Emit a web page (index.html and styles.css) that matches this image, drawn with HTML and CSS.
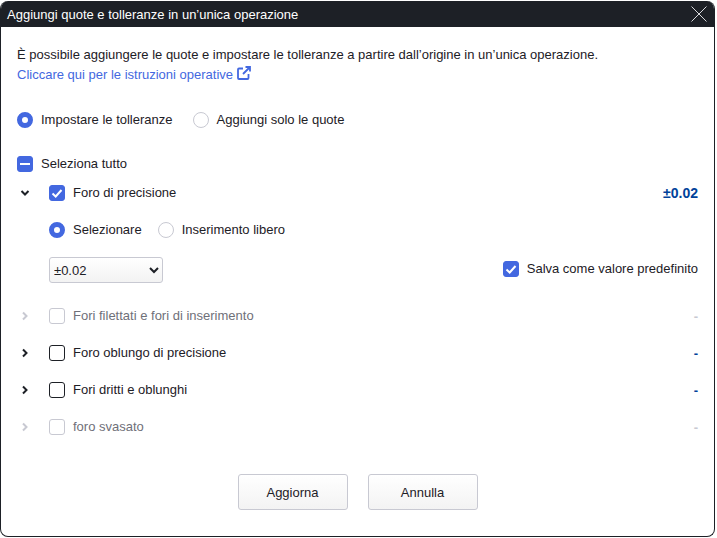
FILE: index.html
```html
<!DOCTYPE html>
<html lang="it">
<head>
<meta charset="UTF-8" />
<meta name="viewport" content="width=device-width, initial-scale=1" />
<title>Aggiungi quote e tolleranze</title>
<link rel="stylesheet" href="styles.css">
</head>
<body>
  <div class="dialog">
    <div class="titlebar">
      <span class="title">Aggiungi quote e tolleranze in un’unica operazione</span>
      <svg class="close" viewBox="0 0 16 16" aria-hidden="true"><path d="M0.5 0.5L15.5 15.5M15.5 0.5L0.5 15.5"/></svg>
    </div>
    <div class="content">
      <p class="intro">È possibile aggiungere le quote e impostare le tolleranze a partire dall’origine in un’unica operazione.</p>
      <a class="guide" href="#">Cliccare qui per le istruzioni operative
        <svg class="ext" viewBox="0 0 14 14" aria-hidden="true">
          <path d="M6 2.500H2a1 1 0 0 0-1 1V12a1 1 0 0 0 1 1h8.500a1 1 0 0 0 1-1V8"/>
          <path d="M8.500 1H13V5.500M13 1L6 8"/>
        </svg>
      </a>

      <div class="options top-options">
        <label class="opt"><span class="radio on"></span>Impostare le tolleranze</label>
        <label class="opt"><span class="radio"></span>Aggiungi solo le quote</label>
      </div>

      <label class="opt select-all"><span class="check mixed"></span>Seleziona tutto</label>

      <div class="row first-row">
        <svg class="chev" viewBox="0 0 10 10" aria-hidden="true"><path d="M1.500 3L5 6.500L8.500 3"/></svg>
        <label class="opt"><span class="check on"><svg viewBox="0 0 16 16" aria-hidden="true"><path d="M3.500 8.500L6.700 11.500L12.500 5"/></svg></span>Foro di precisione</label>
        <span class="value">±0.02</span>
      </div>

      <div class="detail">
        <div class="options">
          <label class="opt"><span class="radio on"></span>Selezionare</label>
          <label class="opt"><span class="radio"></span>Inserimento libero</label>
        </div>
        <div class="detail-line">
          <select class="tol"><option>±0.02</option></select>
          <label class="opt save-default"><span class="check on"><svg viewBox="0 0 16 16" aria-hidden="true"><path d="M3.500 8.500L6.700 11.500L12.500 5"/></svg></span>Salva come valore predefinito</label>
        </div>
      </div>

      <div class="row disabled after-detail">
        <svg class="chev" viewBox="0 0 10 10" aria-hidden="true"><path d="M3 1.500L6.500 5L3 8.500"/></svg>
        <label class="opt"><span class="check"></span>Fori filettati e fori di inserimento</label>
        <span class="value">-</span>
      </div>
      <div class="row">
        <svg class="chev" viewBox="0 0 10 10" aria-hidden="true"><path d="M3 1.500L6.500 5L3 8.500"/></svg>
        <label class="opt"><span class="check"></span>Foro oblungo di precisione</label>
        <span class="value">-</span>
      </div>
      <div class="row">
        <svg class="chev" viewBox="0 0 10 10" aria-hidden="true"><path d="M3 1.500L6.500 5L3 8.500"/></svg>
        <label class="opt"><span class="check"></span>Fori dritti e oblunghi</label>
        <span class="value">-</span>
      </div>
      <div class="row disabled">
        <svg class="chev" viewBox="0 0 10 10" aria-hidden="true"><path d="M3 1.500L6.500 5L3 8.500"/></svg>
        <label class="opt"><span class="check"></span>foro svasato</label>
        <span class="value">-</span>
      </div>

      <div class="actions">
        <button class="btn">Aggiorna</button>
        <button class="btn">Annulla</button>
      </div>
    </div>
  </div>
</body>
</html>
```

FILE: styles.css
```css
:root {
  --dark: #1d2026;
  --blue: #4368e0;
  --text: #1d2026;
  --line: #c8c9d2;
}
html, body {
  margin: 0;
  height: 100%;
  background: #fff;
}
body {
  font-family: "Liberation Sans", Arial, sans-serif;
  font-size: 13px;
  color: var(--text);
}
.dialog {
  box-sizing: border-box;
  width: 715px;
  height: 536px;
  margin-top: 1px;
  border: 1px solid var(--dark);
  border-top: 0;
  border-radius: 8px;
  overflow: hidden;
  background: #fff;
}
.titlebar {
  height: 26px;
  margin: 0 -1px;
  padding: 0 8px 0 7px;
  background: var(--dark);
  color: #fff;
  display: flex;
  align-items: center;
  justify-content: space-between;
}
.title {
  font-size: 13px;
}
.close {
  width: 16px;
  height: 16px;
  fill: none;
  stroke: #d8d9dc;
  stroke-width: 1;
}
.content {
  padding: 0 16px;
}
.intro {
  margin: 18px 0 0;
  line-height: 20px;
}
.guide {
  display: block;
  line-height: 20px;
  color: var(--blue);
  text-decoration: none;
}
.ext {
  width: 14px;
  height: 14px;
  vertical-align: -1px;
  fill: none;
  stroke: var(--blue);
  stroke-width: 1.8;
}
.options {
  display: flex;
  gap: 20px;
}
.top-options {
  margin-top: 25px;
}
.opt {
  display: flex;
  align-items: center;
  gap: 8px;
  line-height: 20px;
}
.radio {
  box-sizing: border-box;
  width: 16px;
  height: 16px;
  border: 1px solid var(--line);
  border-radius: 50%;
  background: #fff;
}
.radio.on {
  border: 5px solid var(--blue);
}
.check {
  box-sizing: border-box;
  width: 16px;
  height: 16px;
  border: 1px solid var(--dark);
  border-radius: 3px;
  background: #fff;
  display: flex;
  align-items: center;
  justify-content: center;
}
.check svg {
  width: 16px;
  height: 16px;
  flex: none;
  fill: none;
  stroke: #fff;
  stroke-width: 2;
}
.check.on, .check.mixed {
  background: var(--blue);
  border-color: var(--blue);
}
.check.mixed::before {
  content: "";
  width: 10px;
  height: 2px;
  background: #fff;
}
.select-all {
  margin-top: 24px;
}
.row {
  display: flex;
  align-items: center;
  height: 20px;
  margin-top: 17px;
}
.first-row {
  margin-top: 9px;
}
.after-detail {
  margin-top: 23px;
}
.chev {
  width: 10px;
  height: 10px;
  margin: 0 19px 0 3px;
  flex: none;
  fill: none;
  stroke: var(--dark);
  stroke-width: 2;
}
.value {
  margin-left: auto;
  font-weight: 700;
  color: #00429a;
}
.first-row .value {
  font-size: 14px;
}
.detail {
  padding-left: 32px;
}
.detail > .options {
  margin-top: 17px;
  gap: 16px;
}
.detail-line {
  display: flex;
  align-items: center;
  justify-content: space-between;
  margin-top: 17px;
}
.save-default {
  margin-bottom: 2px;
}
.tol {
  width: 114px;
  height: 26px;
  border: 1px solid var(--line);
  border-radius: 3px;
  background: linear-gradient(#fff, #f3f3f3);
  color: var(--text);
  font: 13px "Liberation Sans", Arial, sans-serif;
}
.disabled {
  color: #6f7079;
}
.disabled .chev {
  stroke: var(--line);
}
.disabled .check {
  border-color: var(--line);
}
.disabled .value {
  color: var(--line);
}
.actions {
  display: flex;
  justify-content: center;
  gap: 20px;
  margin-top: 37px;
}
.btn {
  width: 110px;
  height: 36px;
  border: 1px solid var(--line);
  border-radius: 3px;
  background: linear-gradient(#fff, #f3f3f3);
  color: var(--text);
  font: 13px "Liberation Sans", Arial, sans-serif;
}
```
